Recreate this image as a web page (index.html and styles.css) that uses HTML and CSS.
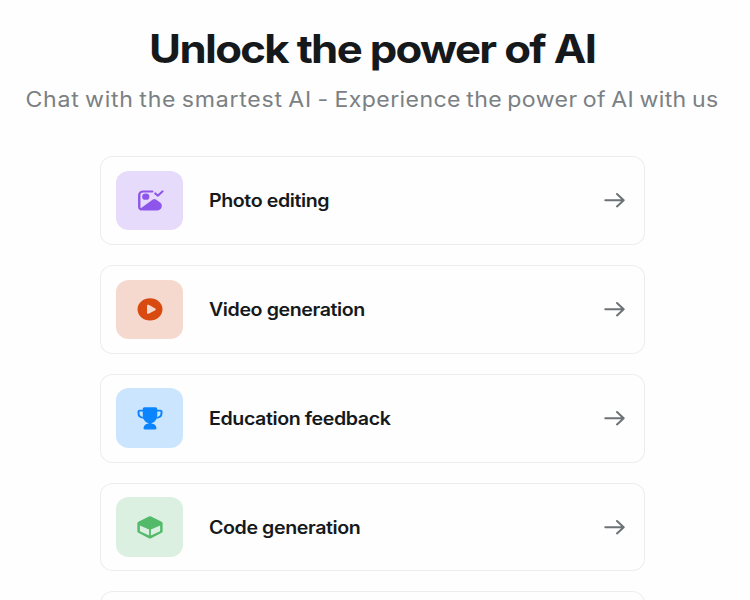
FILE: index.html
```html
<!DOCTYPE html>
<html lang="en">
<head>
<meta charset="utf-8">
<title>Unlock the power of AI</title>
<link rel="stylesheet" href="styles.css">
</head>
<body>
<main class="page">
  <h1 class="title"><span class="title-text">Unlock the power of AI</span></h1>
  <p class="subtitle"><span class="subtitle-text"><span class="lead">Chat with the smartest AI - </span>Experience the power of AI with us</span></p>
  <div class="cards">
    <a class="card">
      <span class="tile purple"><svg class="icon" viewBox="0 0 24 24" preserveAspectRatio="none"><path d="M13.8 4H6.6a3.2 3.2 0 0 0-3.2 3.2v10.8a2.6 2.6 0 0 0 1.2 2.2" fill="none" stroke="currentColor" stroke-width="1.9" stroke-linecap="round"/><circle cx="8.6" cy="8.7" r="2.9" fill="currentColor"/><path d="M3.800 19.800L14.300 11.300q1.200-1 2.400 0l3.400 2.600q1.300 1 1.300 2.600v.8a4 4 0 0 1-4 4H7a4 4 0 0 1-3.200-1.500z" fill="currentColor"/><path d="M16.200 5.800l2.200 2 3.600-3.800" fill="none" stroke="currentColor" stroke-width="1.800" stroke-linecap="round" stroke-linejoin="round"/></svg></span>
      <span class="label">Photo editing</span>
      <svg class="arrow" viewBox="0 0 22 18"><path d="M2.300 9.200H20.500M14 3L20.700 9.200L14 15.400"/></svg>
    </a>
    <a class="card">
      <span class="tile orange"><svg class="icon" viewBox="0 0 24 24" preserveAspectRatio="none"><path fill="currentColor" fill-rule="evenodd" d="M12 2a10 10 0 1 0 0 20 10 10 0 0 0 0-20zM9.600 8.800c0-.7.7-1.100 1.300-.8l5.300 3.200c.6.400.6 1.200 0 1.600L10.900 16c-.6.300-1.300-.1-1.300-.8z"/></svg></span>
      <span class="label">Video generation</span>
      <svg class="arrow" viewBox="0 0 22 18"><path d="M2.300 9.200H20.500M14 3L20.700 9.200L14 15.400"/></svg>
    </a>
    <a class="card">
      <span class="tile blue"><svg class="icon" viewBox="0 0 24 24" preserveAspectRatio="none"><path d="M7 5H3.600a.8.8 0 0 0-.8.8v1.700c0 2.500 1.800 4.100 4.700 4.100M17 5h3.400a.8.8 0 0 1 .8.8v1.700c0 2.500-1.800 4.100-4.700 4.100" fill="none" stroke="currentColor" stroke-width="1.600"/><path fill="currentColor" d="M7.800 2h8.400c1.200 0 1.700.8 1.600 1.800v5c0 3.900-1.800 7-4.600 7.500v.3c2.200.3 3.700 1.500 4 4.100.1.8-.3 1.300-1 1.300H7.800c-.7 0-1.100-.5-1-1.300.3-2.600 1.800-3.800 4-4.100v-.3C8 15.800 6.200 12.700 6.200 8.800v-5C6.100 2.800 6.600 2 7.800 2z"/></svg></span>
      <span class="label">Education feedback</span>
      <svg class="arrow" viewBox="0 0 22 18"><path d="M2.300 9.200H20.500M14 3L20.700 9.200L14 15.400"/></svg>
    </a>
    <a class="card">
      <span class="tile green"><svg class="icon" viewBox="0 0 24 24" preserveAspectRatio="none"><path fill="currentColor" fill-rule="evenodd" d="M12 2q.5 0 .9.200L21.300 7q.8.5.8 1.300v7.400q0 .8-.8 1.300L12.900 21.800q-.9.400-1.800 0L2.700 17q-.8-.5-.8-1.300V8.300q0-.8.8-1.300L11.100 2.200q.4-.2.900-.2zM3.900 10.300v5.200l7.400 4v-5.400zM20.100 10.300L12.700 14.100v5.400l7.400-4z"/></svg></span>
      <span class="label">Code generation</span>
      <svg class="arrow" viewBox="0 0 22 18"><path d="M2.300 9.200H20.500M14 3L20.700 9.200L14 15.400"/></svg>
    </a>
    <div class="card"></div>
  </div>
</main>
</body>
</html>
```
FILE: styles.css
```css
* { box-sizing: border-box; }
body {
  margin: 0;
  height: 600px;
  overflow: hidden;
  background: #fefefe;
  font-family: Inter, "Liberation Sans", sans-serif;
  color: #15191b;
}
.page { width: 745px; height: 600px; padding-top: 24px; overflow: hidden; }
.title {
  margin: 0;
  height: 50px;
  line-height: 50px;
  font-size: 39px;
  font-weight: 700;
  letter-spacing: -1.48px;
  text-align: center;
  white-space: nowrap;
}
.subtitle {
  margin: 10px 0 0;
  height: 30px;
  line-height: 30px;
  font-size: 21px;
  letter-spacing: 0.36px;
  word-spacing: -1.5px;
  color: #7b8083;
  text-align: center;
  white-space: nowrap;
}
.title-text, .subtitle-text { display: inline-block; }
.title-text { transform: scaleX(1.12); }
.subtitle-text { transform: scaleX(1.1) translateY(0.6px); }
.lead { letter-spacing: 0.67px; }
.cards {
  width: 545px;
  margin: 42px 0 0 100px;
  display: flex;
  flex-direction: column;
  gap: 20px;
}
.card {
  flex: none;
  height: 88.85px;
  padding: 0 19px 0 15px;
  display: flex;
  align-items: center;
  border: 1px solid #ebeeee;
  border-radius: 13px / 12px;
}
.tile {
  width: 67px;
  height: 59.5px;
  margin-right: 26px;
  display: flex;
  align-items: center;
  justify-content: center;
  border-radius: 13px / 12px;
}
.purple { background: #e7dbfb; color: #8e55ea; }
.orange { background: #f6d9ce; color: #d84a10; }
.blue { background: #cce5ff; color: #0a84ff; }
.green { background: #dbf0e1; color: #52ba69; }
.icon { width: 30px; height: 26.6px; }
.label {
  flex: 1;
  font-size: 18px;
  line-height: 24px;
  font-weight: 600;
  letter-spacing: -0.38px;
  white-space: nowrap;
  transform: scaleX(1.09) translateY(0.5px);
  transform-origin: left center;
}
.arrow {
  width: 22px;
  height: 18px;
  fill: none;
  stroke: #6c7275;
  stroke-width: 2;
  stroke-linecap: round;
  stroke-linejoin: round;
}
```
